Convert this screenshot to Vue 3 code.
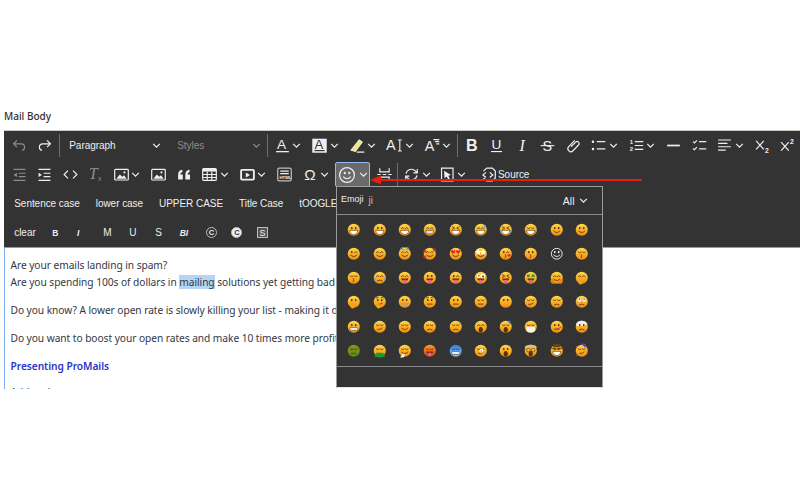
<template>
  <div class="page">
    <div class="label">Mail Body</div>

    <div class="editor">
      <svg class="defs" aria-hidden="true">
        <defs>
          <linearGradient id="face-y" x1="0" y1="0" x2="0" y2="1"><stop offset="0" stop-color="#ffd84a" /><stop offset="1" stop-color="#f18a0c" /></linearGradient>
          <linearGradient id="face-g" x1="0" y1="0" x2="0" y2="1"><stop offset="0" stop-color="#7f9a1c" /><stop offset="1" stop-color="#5f8a18" /></linearGradient>
          <linearGradient id="face-r" x1="0" y1="0" x2="0" y2="1"><stop offset="0" stop-color="#f8a020" /><stop offset="1" stop-color="#e5381c" /></linearGradient>
          <linearGradient id="face-b" x1="0" y1="0" x2="0" y2="1"><stop offset="0" stop-color="#2f7fe8" /><stop offset="1" stop-color="#7cc4f4" /></linearGradient>
        </defs>
      </svg>

      <div class="toolbar">
        <!-- filas 1 y 2, salen de los datos -->
        <div v-for="(row, r) in iconRows" :key="r" class="row">
          <template v-for="(item, n) in row" :key="n">
            <span v-if="item.sep" class="sep" :class="item.cls"></span>
            <span v-else-if="item.select" class="select" :class="item.cls">
              {{ item.select }}
              <svg class="chev" viewBox="0 0 10 10"><path d="M2 3.500l3 3 3-3" /></svg>
            </span>
            <span v-else class="btn" :class="[item.cls, { split: item.drop, dim: item.dim, active: item.active, source: item.label }]">
              <svg class="icon" :class="{ big: item.active }" viewBox="0 0 20 20" v-html="ICONS[item.i]"></svg>
              <svg v-if="item.drop" class="chev" viewBox="0 0 10 10"><path d="M2 3.500l3 3 3-3" /></svg>
              <span v-if="item.label">{{ item.label }}</span>
            </span>
          </template>
        </div>

        <!-- fila 3 -->
        <div class="row">
          <span v-for="word in caseButtons" :key="word" class="word">{{ word }}</span>
        </div>

        <!-- fila 4 -->
        <div class="row">
          <span class="word">clear</span>
          <span class="btn tiny tight"><b>B</b></span>
          <span class="btn tiny tight"><b><i>I</i></b></span>
          <span class="btn med after-i">M</span>
          <span class="btn med">U</span>
          <span class="btn med">S</span>
          <span class="btn tiny"><b><i>BI</i></b></span>
          <span class="btn after-bi"><span class="ring">C</span></span>
          <span class="btn"><span class="ring solid">C</span></span>
          <span class="btn"><span class="boxed">S</span></span>
        </div>
      </div>

      <div class="content">
        <p>Are your emails landing in spam?<br />Are you spending 100s of dollars in <span class="sel">mailing</span> solutions yet getting bad results?</p>
        <p>Do you know? A lower open rate is slowly killing your list - making it dead.</p>
        <p>Do you want to boost your open rates and make 10 times more profits?</p>
        <p class="promo">Presenting ProMails</p>
        <p>Add and</p>
      </div>

      <!-- panel de emojis -->
      <div class="emoji-panel">
        <div class="emoji-head">
          <span class="title">Emoji</span>
          <span class="query">ji</span>
          <span class="all">All<svg class="chev" viewBox="0 0 10 10"><path d="M2 3.500l3 3 3-3" /></svg></span>
        </div>
        <div class="emoji-grid">
          <svg v-for="(e, idx) in emojis" :key="idx" class="emoji" viewBox="0 0 20 20" v-html="e"></svg>
        </div>
        <div class="emoji-foot"></div>
      </div>

      <!-- flecha roja -->
      <svg class="arrow" viewBox="0 0 272 10">
        <path d="M10 4h262v2H10z" fill="#e6200c" />
        <path d="M0 5l11-4.500v9z" fill="#e6200c" />
      </svg>
    </div>
  </div>
</template>

<script setup>
// Iconos de la barra
const txt = (x, y, size, str, extra = '') =>
  `<text x="${x}" y="${y}" font-size="${size}" fill="currentColor" stroke="none" font-family="Liberation Sans, sans-serif" ${extra}>${str}</text>`;
const solid = (d) => `<path d="${d}" fill="currentColor" stroke="none"/>`;
const line = (d) => `<path d="${d}"/>`;

const ICONS = {
  undo: line('M7 4 3 8l4 4M3 8h9a4 4 0 0 1 4 4 4 4 0 0 1-3 3.800'),
  redo: line('M13 4l4 4-4 4M17 8H8a4 4 0 0 0-4 4 4 4 0 0 0 3 3.800'),
  outdent: line('M3 4h14M9 8.500h8M9 12.500h8M3 17h14') + solid('M7 8v5l-4-2.500z'),
  indent: line('M3 4h14M9 8.500h8M9 12.500h8M3 17h14') + solid('M3 8v5l4-2.500z'),
  code: line('M7 5.500 2.500 10 7 14.500M13 5.500l4.500 4.500-4.500 4.500'),
  clearf: `<text x="2" y="15" font-size="19" fill="currentColor" stroke="none" font-family="Liberation Serif, serif" font-style="italic">T</text>` + txt(13, 18, 8, 'x'),
  image: '<rect x="2" y="4" width="16" height="12.500" rx="1"/>' + solid('M4 15l4-5 3 2.500 2-1.500 3 4z') + '<circle cx="13.500" cy="7.500" r="1.200" fill="currentColor" stroke="none"/>',
  quote: solid('M2.500 16v-6q0-4.500 5-5.500v2.500q-2.500.8-2.500 3h3v6zM11 16v-6q0-4.500 5-5.500v2.500q-2.500.8-2.500 3h3v6z'),
  table: '<rect x="2" y="3" width="16" height="14" rx="1.500"/>' + solid('M2 3h16v3.500H2z') + line('M2 10h16M2 13.500h16M7.300 6.500V17M12.700 6.500V17'),
  media: '<rect x="2.500" y="4.500" width="15" height="11.500" rx="1" stroke-width="2.200"/>' + solid('M8 7.500l5 3-5 3z'),
  htmlbox: '<rect x="2" y="2.500" width="16" height="15" rx="2" opacity=".75"/>' + line('M5 6h10M5 9h10') + txt(4.200, 15.500, 5, 'HTML', 'font-weight="bold"'),
  omega: txt(2.500, 16.500, 18, 'Ω'),
  smile: '<circle cx="10" cy="10" r="8.200"/>' + solid('M6.300 7.800a1.200 1.500 0 1 0 2.400 0a1.200 1.500 0 1 0-2.400 0zM11.300 7.800a1.200 1.500 0 1 0 2.400 0a1.200 1.500 0 1 0-2.400 0z') + line('M5.800 11.800q4.200 4.600 8.400 0'),
  pagebreak: line('M4.500 2.500v4.500h11V2.500M4.500 17.500V13h11v4.500M1.500 10h4M8 10h4M14.500 10h4'),
  refresh: line('M3.500 9a6.500 6.500 0 0 1 11-3.200l2 2M16.800 3.500v4.500h-4.500M16.500 11a6.500 6.500 0 0 1-11 3.200l-2-2M3.200 16.500V12h4.500'),
  findbox: line('M3 2.500h13.500v15H3z') + solid('M6 5.500l8 5-3 1 2 4-2 .8-2-4-2.500 2z'),
  source: line('M4 6l4-3.500h6.500L18 6v8l-3.500 3.500H8L4 14') + line('M7 7.500 3.500 10.500 7 13.500M11.500 7.500l3.500 3-3.500 3'),
  fontcolor: txt(3.500, 14.500, 16, 'A') + solid('M2.500 16.500h15v1.500h-15z'),
  bgcolor: '<rect x="1.500" y="2" width="17" height="16.500" fill="currentColor" stroke="none"/>' + `<text x="4" y="14" font-size="15.500" fill="#333" stroke="none" font-family="Liberation Sans, sans-serif">A</text>` + '<path d="M4 16h12" stroke="#333"/>',
  highlight: '<path d="M2.500 15.500 12 3.500l3.500 2.500-8 11z" fill="#f5e66a" stroke="currentColor" stroke-width="1.200"/>' + solid('M9 17h9v1.500H9z'),
  fontsize: txt(0, 15.500, 17, 'A') + solid('M14 3h4.500v1.200h-1.600v11.600h1.600V17H14v-1.200h1.600V4.200H14z'),
  fontfam: txt(1, 16.500, 17, 'A') + line('M11 3h7M13 5.500h5M14.500 8h3.500'),
  bold: txt(3.500, 16, 19, 'B', 'font-weight="bold"'),
  underline: txt(4, 14.500, 16, 'U') + solid('M3.500 16.500h13v1.300h-13z'),
  italic: `<text x="6.500" y="16" font-size="19" fill="currentColor" stroke="none" font-family="Liberation Serif, serif" font-style="italic">I</text>`,
  strike: txt(4, 16, 17, 'S') + solid('M2 9.500h16v1.300H2z'),
  link: line('M7 11.500 12.500 6a2.400 2.400 0 0 1 3.400 3.400l-6.500 6.800a3.400 3.400 0 0 1-5-4.800l7-7.400'),
  bullets: solid('M2 5.500a1.500 1.500 0 1 0 3 0a1.500 1.500 0 1 0-3 0zM2 14a1.500 1.500 0 1 0 3 0a1.500 1.500 0 1 0-3 0z') + line('M8 5.500h10M8 14h10'),
  numbered: txt(2, 8, 7, '1', 'font-weight="bold"') + txt(2, 17, 7, '2', 'font-weight="bold"') + line('M8 5.500h10M8 10h10M8 14.500h10'),
  hr: '<path d="M2.500 10h15" stroke-width="2"/>',
  todo: line('M2.500 5.500l1.500 1.500 3-3M2.500 13.500l1.500 1.500 3-3M9.500 5.500h8.500M9.500 14h8.500'),
  align: line('M2.500 3.500h15M2.500 7.500h11M2.500 11.500h15M2.500 15.500h9'),
  sub: line('M2.500 4.500l9 10M11.500 4.500l-9 10') + txt(13, 18.500, 8, '2', 'font-weight="bold"'),
  sup: line('M2.500 6l9 10M11.500 6l-9 10') + txt(13, 8.500, 8, '2', 'font-weight="bold"'),
};

const iconRows = [
  [
    { i: 'undo', dim: true },
    { i: 'redo' },
    { sep: true },
    { select: 'Paragraph', cls: 'para' },
    { select: 'Styles', cls: 'styles' },
    { sep: true },
    { i: 'fontcolor', drop: true },
    { i: 'bgcolor', drop: true },
    { i: 'highlight', drop: true },
    { i: 'fontsize', drop: true },
    { i: 'fontfam', drop: true },
    { sep: true, cls: 'tight-sep' },
    { i: 'bold' },
    { i: 'underline' },
    { i: 'italic' },
    { i: 'strike' },
    { i: 'link' },
    { i: 'bullets', drop: true },
    { i: 'numbered', drop: true },
    { i: 'hr' },
    { i: 'todo' },
    { i: 'align', drop: true },
    { i: 'sub' },
    { i: 'sup' },
  ],
  [
    { i: 'outdent', dim: true },
    { i: 'indent' },
    { i: 'code' },
    { i: 'clearf', dim: true },
    { i: 'image', drop: true },
    { i: 'image' },
    { i: 'quote' },
    { i: 'table', drop: true },
    { i: 'media', drop: true },
    { i: 'htmlbox' },
    { i: 'omega', drop: true },
    { i: 'smile', drop: true, active: true },
    { i: 'pagebreak' },
    { sep: true, cls: 'tight-sep' },
    { i: 'refresh', drop: true, cls: 'narrow' },
    { i: 'findbox', drop: true },
    { i: 'source', label: 'Source' },
  ],
];
const caseButtons = ['Sentence case', 'lower case', 'UPPER CASE', 'Title Case', 'tOOGLE'];

// Emojis dibujados a mano
const BROWN = '#5b3209';
const fill = (d, c = BROWN) => `<path d="${d}" fill="${c}"/>`;
const stroke = (d, c = BROWN, w = 1.200) => `<path d="${d}" fill="none" stroke="${c}" stroke-width="${w}" stroke-linecap="round"/>`;

const P = {
  eyes: fill('M5.800 7.500a1.300 1.700 0 1 0 2.600 0a1.300 1.700 0 1 0-2.600 0zM11.600 7.500a1.300 1.700 0 1 0 2.600 0a1.300 1.700 0 1 0-2.600 0z'),
  weyes: fill('M5.800 7.500a1.300 1.700 0 1 0 2.600 0a1.300 1.700 0 1 0-2.600 0zM11.600 7.500a1.300 1.700 0 1 0 2.600 0a1.300 1.700 0 1 0-2.600 0z', '#fff'),
  wsmile: stroke('M5.500 12q4.500 4.500 9 0', '#fff', 1.300),
  happy: stroke('M5 8q2-2.500 4 0M11 8q2-2.500 4 0'),
  closed: stroke('M5 7.500q2 2 4 0M11 7.500q2 2 4 0'),
  squint: stroke('M5 5.500l3.500 2-3.500 2M15 5.500l-3.500 2 3.500 2'),
  wink: stroke('M11 8q2-2.500 4 0') + fill('M5.800 7.500a1.300 1.700 0 1 0 2.600 0a1.300 1.700 0 1 0-2.600 0z'),
  grin: `<path d="M4 11h12q-.8 6-6 6t-6-6z" fill="#fff" stroke="${BROWN}" stroke-width=".8"/>`,
  teeth: `<path d="M4.500 11h11v4q-5.500 2.500-11 0z" fill="#dfe3e6" stroke="${BROWN}" stroke-width=".8"/>`,
  grimace: `<rect x="4" y="11" width="12" height="4.500" rx="2" fill="#eef0f2" stroke="${BROWN}" stroke-width=".8"/>`,
  smile: stroke('M5.500 12q4.500 4.500 9 0'),
  kiss: stroke('M9 11q2.500 1.300 .5 2.500q2 1.200-.5 2.500'),
  flatm: stroke('M6.500 13.500h7'),
  sad: stroke('M6.500 14.500q3.500-2.500 7 0'),
  smirk: stroke('M7 14q4 .5 6.500-2'),
  zip: stroke('M5 13h10', '#9aa0a4', 2),
  tongue: fill('M5 11h10q0 3.500-5 3.500T5 11z') + fill('M7.500 13h5v2.500a2.500 2.500 0 0 1-5 0z', '#ec5f92'),
  open: fill('M10 10.500a3.200 4 0 1 0 .01 0z'),
  tears: fill('M2.500 10q-2.500 3 0 4.500q2.500-1.500 0-4.500zM17.500 10q-2.500 3 0 4.500q2.500-1.500 0-4.500z', '#48a8f0'),
  sweat: fill('M16 2q-2.500 3 0 4.500q2.500-1.500 0-4.500z', '#48a8f0'),
  halo: '<ellipse cx="10" cy="2.500" rx="6.500" ry="1.800" fill="none" stroke="#4ab4f0" stroke-width="1.300"/>',
  hearts: fill('M3 5q-2-1.500-2.500.5t2.500 3q2.500-1 2-3T3 5zM17 3q-2-1.500-2.500.5t2.500 3q2.500-1 2-3T17 3zM2.500 13q-2-1-2.200.8t2.200 3q2.500-1 2-3t-2-.8z', '#e8262e'),
  hearteyes: fill('M6.500 5.500q-2.500-2-3.500.5t3.500 4q3.500-1.500 3-4t-3-.5zM13.500 5.500q-2.500-2-3 .5t3 4q3.500-1.500 3.500-4t-3.500-.5z', '#e8262e'),
  stars: fill('M6.500 3l1.300 3 3.200.3-2.400 2.200.7 3.200-2.800-1.700-2.800 1.700.7-3.200L1.500 6.300 4.700 6zM13.500 3l1.300 3 3.200.3-2.400 2.200.7 3.200-2.800-1.700-2.800 1.700.7-3.200-2.400-2.200 3.200-.3z', '#fff'),
  heartm: fill('M15 11q-2-1.500-2.500.5t2.500 3q2.500-1 2-3t-2-.5z', '#e8262e'),
  hand: fill('M6 13q-2 2-1 4.500t3 2.500 3-2l-1-5-1.500 1-.5-5h-1.500z', '#f3a21c'),
  glasses: '<circle cx="7" cy="7.500" r="2.800" fill="#fff"/><circle cx="13" cy="7.500" r="3.500" fill="#fff"/>' + fill('M6 7a1.200 1.200 0 1 0 2.400 0a1.200 1.200 0 1 0-2.400 0zM12 8a1.500 1.500 0 1 0 3 0a1.500 1.500 0 1 0-3 0z'),
  money: fill('M4.500 5h4v4h-4zM11.500 5h4v4h-4z', '#2e9a3c') + fill('M7.500 13h5v5h-5z', '#2e9a3c'),
  hugs: fill('M1 13q-1 4 2 6h4l-1-5-3-2zM19 13q1 4-2 6h-4l1-5 3-2z', '#ef7f12'),
  mask: fill('M3.500 10h13v5q-1 3.500-6.500 3.500T3.500 15z', '#f2f4f5'),
  rollup: '<circle cx="6.500" cy="7.500" r="2.800" fill="#e8e8e8"/><circle cx="13.500" cy="7.500" r="2.800" fill="#e8e8e8"/>' + fill('M5.500 6a1 1 0 1 0 2 0a1 1 0 1 0-2 0zM12.500 6a1 1 0 1 0 2 0a1 1 0 1 0-2 0z'),
  brow: stroke('M5 4.500l3-1M12 3.500q2-.8 3.500 1'),
  therm: stroke('M10 14l7-4', '#e8262e', 1.400),
  bandage: fill('M1.500 6q2-5 8.500-5 6 0 8.500 5L12 9 2.500 9z', '#eceff1'),
  puke: fill('M5 13h10l3 5.500q-8 3-16 0z', '#1e9a2e'),
  tissue: fill('M3 20l4-6 4 2-3 4z', '#eceff1'),
  dizzy: fill('M11 7a3 3 0 1 0 .01 0z', '#fff') + stroke('M10 10q1.500-1 1 1', BROWN, .8),
  explorer: fill('M2 3q8-4 16 0l1 3H1z', '#d9c08a') + '<circle cx="6.500" cy="9" r="2.800" fill="none" stroke="#7a3b10" stroke-width="1"/><circle cx="13.500" cy="9" r="2.800" fill="none" stroke="#7a3b10" stroke-width="1"/>',
  hat: fill('M5 0h10l1 5H4z', '#6b4218') + fill('M0 5q10 3 20 0q-2 3-10 3T0 5z', '#6b4218'),
  party: fill('M9 -1l7 1-1 6z', '#6a3fc0') + fill('M2 3l1 1-1 1-1-1zM18 9l1 1-1 1-1-1zM2 16l1 1-1 1-1-1z', '#d43dc0'),
  zzz: stroke('M14 1.500h3l-3 3h3', '#3b6fd8', 1),
};

const E = (spec) => {
  const [face, ...parts] = spec.split(' ');
  const base = face === 'o'
    ? '<circle cx="10" cy="10" r="8" fill="none" stroke="#fff" stroke-width="1.300"/>'
    : `<circle cx="10" cy="10" r="9" fill="url(#face-${face})"/>`;
  return base + parts.map((p) => P[p]).join('');
};

const emojis = [
  // caras sonrientes
  'y eyes grin', 'y eyes grin', 'y happy grin', 'y happy teeth', 'y squint grin', 'y happy grin sweat', 'y squint grin tears', 'y closed grin tears', 'y eyes smile', 'y eyes smile',
  'y wink smile', 'y happy smile', 'y happy smile halo', 'y happy smile hearts', 'y hearteyes smile', 'y stars smile', 'y wink kiss heartm', 'y eyes kiss', 'o weyes wsmile', 'y closed kiss',
  'y closed kiss', 'y happy sad tears', 'y happy smile tongue', 'y eyes tongue', 'y wink tongue', 'y glasses tongue', 'y squint tongue', 'y money tongue', 'y happy smile hugs', 'y happy hand',
  // neutras
  'y eyes hand', 'y brow eyes smirk hand', 'y eyes zip', 'y brow eyes flatm', 'y eyes flatm', 'y closed flatm', 'y eyes', 'y closed smirk', 'y closed sad', 'y rollup sad',
  'y eyes grimace', 'y closed smirk', 'y closed smile', 'y closed sad', 'y closed sad sweat', 'y happy open', 'y closed open zzz', 'y closed mask', 'y eyes flatm therm', 'y bandage eyes sad',
  // malestar
  'g closed sad', 'y closed puke', 'y closed smile tissue', 'r closed tongue', 'b closed grimace', 'y closed smirk dizzy', 'y eyes open', 'y explorer open', 'y hat eyes grin', 'y party closed smirk',
].map(E);
</script>

<style>
html,
body {
  margin: 0;
  background: #fff;
}
</style>

<style scoped>
.page {
  width: 800px;
  height: 500px;
  box-sizing: border-box;
  padding: 110px 0 0 4px;
  overflow: hidden;
  font-family: "Liberation Sans", Arial, sans-serif;
}

.label {
  height: 13px;
  margin-bottom: 7px;
  font-family: "Noto Sans", sans-serif;
  font-size: 10px;
  font-weight: 500;
  line-height: 13px;
  color: #333;
}

.editor {
  position: relative;
  width: 796px;
}

.defs {
  position: absolute;
  width: 0;
  height: 0;
}

.toolbar {
  height: 116px;
  background: #333;
  border-top: 1px solid #c8c8c8;
  color: #efefef;
  font-size: 10px;
  letter-spacing: -0.050px;
}

.row {
  display: flex;
  align-items: center;
  height: 29px;
  padding-left: 2.250px;
  white-space: nowrap;
}

.btn {
  display: inline-flex;
  flex: none;
  align-items: center;
  justify-content: center;
  width: 25.500px;
  height: 25px;
  box-sizing: border-box;
}

.btn.tight {
  width: 23px;
}

.btn.after-i {
  margin-left: 5px;
}

.btn.after-bi {
  margin-left: 2px;
}

.btn.split {
  width: 37.500px;
  justify-content: flex-start;
  padding-left: 4.250px;
}

.btn.split.narrow {
  width: 35.500px;
}

.btn.dim {
  color: #8c8c8c;
}

.btn.split.active {
  width: 35px;
  margin: 0 1.500px 0 0.500px;
  padding-left: 2px;
  background: #6a6a6a;
  border: 1.500px solid #8fbcf2;
  border-radius: 2px;
}

.btn.source {
  width: auto;
  margin-left: 7.750px;
  gap: 1.500px;
}

.icon {
  flex: none;
  width: 17px;
  height: 17px;
  fill: none;
  stroke: currentColor;
  stroke-width: 1.400;
}

.icon.big {
  width: 18px;
  height: 18px;
}

.chev {
  flex: none;
  width: 11px;
  height: 11px;
  fill: none;
  stroke: currentColor;
  stroke-width: 1.100;
}

.btn.split .chev {
  margin-left: 0.500px;
}

.btn.split.active .chev {
  margin-left: 1.500px;
}

.sep {
  flex: none;
  width: 1px;
  height: 23px;
  margin: 0 1.500px;
  background: #6e6e6e;
}

.sep.tight-sep {
  margin: 0 0.500px 0 0;
}

.select {
  display: inline-flex;
  flex: none;
  align-items: center;
  justify-content: space-between;
  box-sizing: border-box;
  height: 25px;
}

.para {
  width: 101px;
  padding-left: 8px;
  margin-right: 15px;
}

.styles {
  width: 88px;
  padding-right: 3px;
  color: #8c8c8c;
}

.word {
  flex: none;
  padding: 0 8px;
}

.tiny {
  font-size: 8.500px;
}

.med {
  font-size: 10px;
  font-weight: 500;
}

.ring {
  display: inline-flex;
  align-items: center;
  justify-content: center;
  width: 11px;
  height: 11px;
  box-sizing: border-box;
  border: 1.500px solid #bdbdbd;
  border-radius: 50%;
  font-size: 7.500px;
  font-weight: bold;
}

.ring.solid {
  background: #efefef;
  color: #333;
}

.boxed {
  display: inline-flex;
  align-items: center;
  justify-content: center;
  width: 11px;
  height: 11px;
  box-sizing: border-box;
  border: 1px solid #bdbdbd;
  background: #555;
  font-size: 9px;
}

.content {
  height: 142px;
  box-sizing: border-box;
  padding: 8.500px 0 0 5.500px;
  overflow: hidden;
  border-top: 1px solid #6f9fe6;
  border-left: 1.500px solid #7fb0f2;
  background: #fff;
  font-family: "Noto Sans", sans-serif;
  font-size: 10.200px;
  letter-spacing: -0.050px;
  line-height: 17px;
  color: #33383f;
  white-space: nowrap;
}

.content p {
  margin: 0 0 11px;
}

.content p.promo {
  margin-bottom: 9px;
  color: #2a35c6;
  font-weight: 600;
}

.sel {
  background: #b4d5f7;
}

.emoji-panel {
  position: absolute;
  top: 56px;
  left: 332px;
  width: 267px;
  height: 202px;
  box-sizing: border-box;
  display: flex;
  flex-direction: column;
  background: #333;
  border: 1px solid #9c9c9c;
  border-bottom-color: #e6e6e6;
  color: #efefef;
}

.emoji-head {
  display: flex;
  align-items: center;
  flex: none;
  height: 27px;
  padding: 0 13.500px 0 4px;
  border-bottom: 1.500px solid #8a8a8a;
  font-size: 9px;
}

.title {
  padding-bottom: 3px;
}

.query {
  margin-left: 5px;
  color: #bdbdbd;
  font-size: 10px;
}

.all {
  display: inline-flex;
  align-items: center;
  gap: 3px;
  margin-left: auto;
  font-size: 10.500px;
}

.emoji-grid {
  display: grid;
  flex: none;
  grid-template-columns: repeat(10, 25.300px);
  grid-auto-rows: 24.200px;
  height: 152px;
  padding: 2.500px 0 0 4.500px;
  box-sizing: border-box;
  place-items: center;
  border-bottom: 1.500px solid #8a8a8a;
}

.emoji {
  width: 13.500px;
  height: 13.500px;
  overflow: visible;
}

.arrow {
  position: absolute;
  top: 45px;
  left: 366px;
  width: 272px;
  height: 10px;
}
</style>
